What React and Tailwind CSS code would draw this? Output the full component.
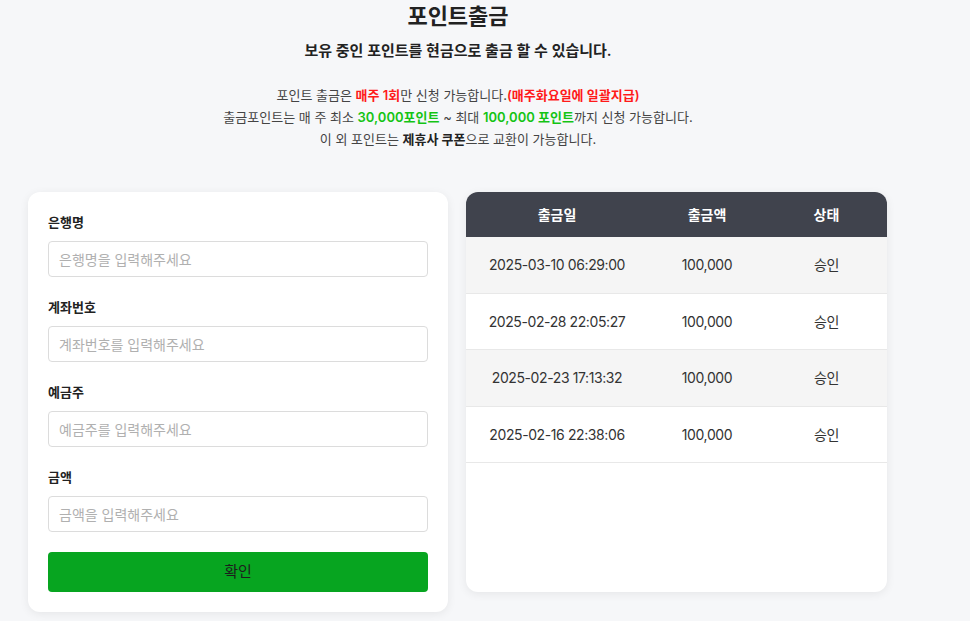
import React from "react";

const rows = [
  ["2025-03-10 06:29:00", "100,000", "승인"],
  ["2025-02-28 22:05:27", "100,000", "승인"],
  ["2025-02-23 17:13:32", "100,000", "승인"],
  ["2025-02-16 22:38:06", "100,000", "승인"],
];

const fields = [
  ["은행명", "은행명을 입력해주세요"],
  ["계좌번호", "계좌번호를 입력해주세요"],
  ["예금주", "예금주를 입력해주세요"],
  ["금액", "금액을 입력해주세요"],
];

export default function App() {
  return (
    <div
      className="min-h-[621px] w-[970px] bg-[#f6f7f9] text-[#222] overflow-hidden"
      style={{ fontFamily: 'Inter, "Noto Sans CJK KR", sans-serif' }}
    >
      <div className="ml-[28px] w-[860px] flex flex-col items-center">
        <h1 className="mt-[2px] text-[22px] leading-[28px] font-bold text-[#222]">포인트출금</h1>
        <p className="mt-[10px] text-[15px] leading-[22px] font-semibold text-[#222]">
          보유 중인 포인트를 현금으로 출금 할 수 있습니다.
        </p>
        <div className="mt-[22px] text-[13px] leading-[22px] text-[#444] text-center">
          <p>
            포인트 출금은 <span className="text-[#ff1a1a] font-semibold">매주 1회</span>만 신청 가능합니다.
            <span className="text-[#ff1a1a] font-semibold">(매주화요일에 일괄지급)</span>
          </p>
          <p>
            출금포인트는 매 주 최소 <span className="text-[#14c414] font-semibold">30,000포인트</span> ~ 최대{" "}
            <span className="text-[#14c414] font-semibold">100,000 포인트</span>까지 신청 가능합니다.
          </p>
          <p>
            이 외 포인트는 <span className="font-bold text-[#222]">제휴사 쿠폰</span>으로 교환이 가능합니다.
          </p>
        </div>
      </div>

      <div className="mt-[42px] ml-[28px] flex items-start gap-[18px]">
        <div className="w-[420px] rounded-[12px] bg-white px-[20px] pt-[20px] pb-[20px] shadow-[0_2px_10px_rgba(0,0,0,0.07)]">
          {fields.map(([label, ph]) => (
            <div key={label} className="mb-[20px]">
              <div className="text-[13px] leading-[20px] font-semibold text-[#222] mb-[9px]">{label}</div>
              <input
                className="w-full h-[36px] rounded-[4px] border border-[#dcdcdc] px-[10px] text-[14px] placeholder:text-[#b0b0b0] outline-none"
                placeholder={ph}
              />
            </div>
          ))}
          <button className="block w-full h-[40px] rounded-[4px] bg-[#07a520] text-[15px] text-[#1d1d1d]">
            확인
          </button>
        </div>

        <div className="w-[421px] h-[400px] rounded-[12px] bg-white overflow-hidden shadow-[0_2px_10px_rgba(0,0,0,0.07)]">
          <div className="grid grid-cols-[182px_118px_1fr] h-[45px] bg-[#40434d] text-white text-[14px] font-bold items-center text-center">
            <div>출금일</div>
            <div>출금액</div>
            <div>상태</div>
          </div>
          {rows.map((r, i) => (
            <div
              key={i}
              className={`grid grid-cols-[182px_118px_1fr] h-[56.5px] items-center text-center text-[14px] tracking-[-0.4px] text-[#333] border-b border-[#e8e8e8] ${
                i % 2 === 0 ? "bg-[#f5f5f5]" : "bg-white"
              }`}
            >
              <div>{r[0]}</div>
              <div>{r[1]}</div>
              <div>{r[2]}</div>
            </div>
          ))}
        </div>
      </div>
    </div>
  );
}
